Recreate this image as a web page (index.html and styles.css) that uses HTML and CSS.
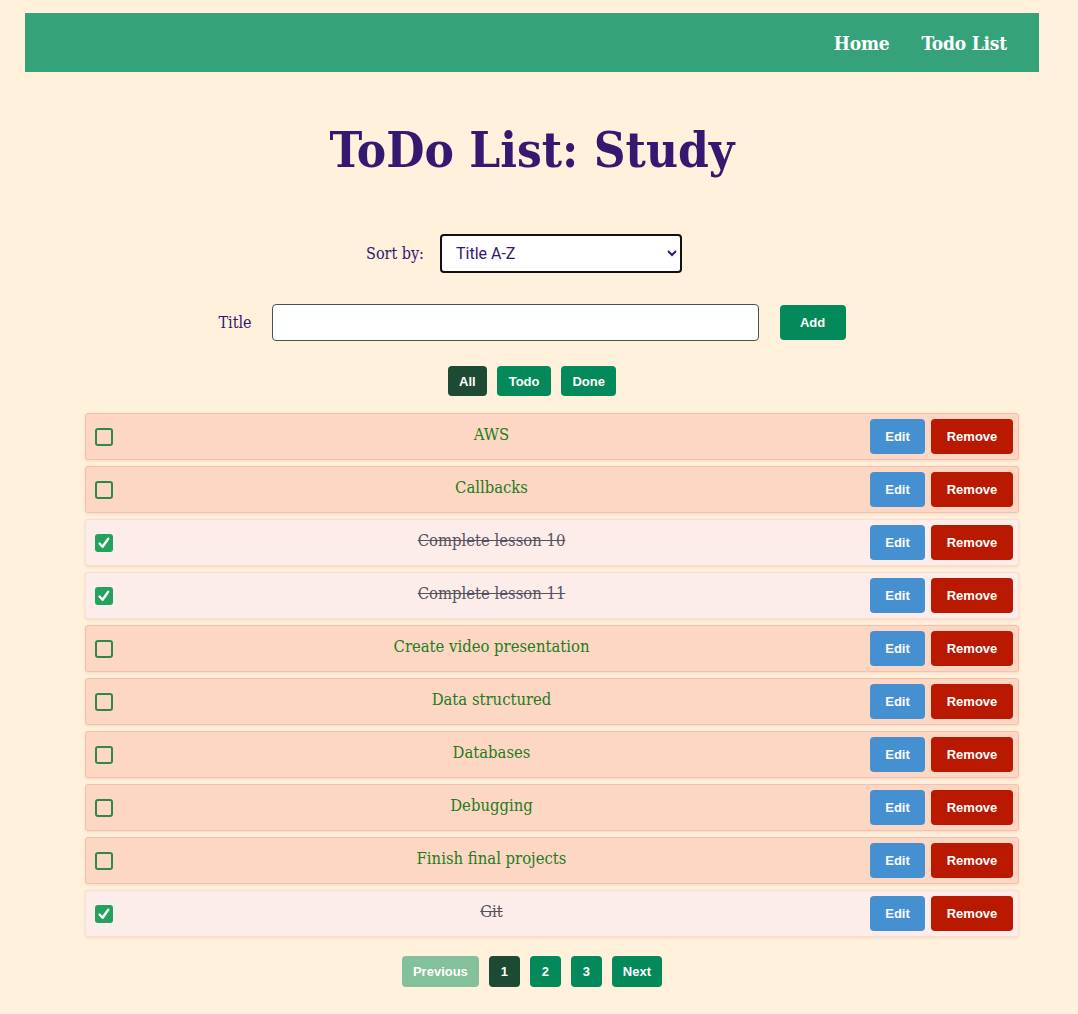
FILE: index.html
```html
<!DOCTYPE html>
<html lang="en">
<head>
<meta charset="utf-8">
<title>ToDo List: Study</title>
<link rel="stylesheet" href="styles.css">
</head>
<body>
<div class="page">
  <nav class="navbar">
    <a class="nav-link" href="#">Home</a>
    <a class="nav-link" href="#">Todo List</a>
  </nav>

  <h1 class="heading">ToDo List: Study</h1>

  <div class="sort-row">
    <label class="sort-label" for="sort">Sort by:</label>
    <select class="sort-select" id="sort">
      <option>Title A-Z</option>
      <option>Title Z-A</option>
    </select>
  </div>

  <form class="add-row" onsubmit="return false">
    <label class="add-label" for="title">Title</label>
    <input class="add-input" id="title" type="text">
    <button class="btn btn-green btn-add" type="submit">Add</button>
  </form>

  <div class="filters">
    <button class="btn btn-dark btn-filter">All</button>
    <button class="btn btn-green btn-filter">Todo</button>
    <button class="btn btn-green btn-filter">Done</button>
  </div>

  <ul class="todo-list">
    <li class="todo-item">
      <span class="check"></span>
      <span class="todo-title">AWS</span>
      <button class="btn btn-blue btn-row">Edit</button>
      <button class="btn btn-red btn-row btn-remove">Remove</button>
    </li>
    <li class="todo-item">
      <span class="check"></span>
      <span class="todo-title">Callbacks</span>
      <button class="btn btn-blue btn-row">Edit</button>
      <button class="btn btn-red btn-row btn-remove">Remove</button>
    </li>
    <li class="todo-item done">
      <span class="check checked"><svg viewBox="0 0 18 18" width="18" height="18"><path d="M4.6 9.6 L7.6 12.8 L13.2 4.8" fill="none" stroke="#fff" stroke-width="2.4" stroke-linecap="round" stroke-linejoin="round"/></svg></span>
      <span class="todo-title">Complete lesson 10</span>
      <button class="btn btn-blue btn-row">Edit</button>
      <button class="btn btn-red btn-row btn-remove">Remove</button>
    </li>
    <li class="todo-item done">
      <span class="check checked"><svg viewBox="0 0 18 18" width="18" height="18"><path d="M4.6 9.6 L7.6 12.8 L13.2 4.8" fill="none" stroke="#fff" stroke-width="2.4" stroke-linecap="round" stroke-linejoin="round"/></svg></span>
      <span class="todo-title">Complete lesson 11</span>
      <button class="btn btn-blue btn-row">Edit</button>
      <button class="btn btn-red btn-row btn-remove">Remove</button>
    </li>
    <li class="todo-item">
      <span class="check"></span>
      <span class="todo-title">Create video presentation</span>
      <button class="btn btn-blue btn-row">Edit</button>
      <button class="btn btn-red btn-row btn-remove">Remove</button>
    </li>
    <li class="todo-item">
      <span class="check"></span>
      <span class="todo-title">Data structured</span>
      <button class="btn btn-blue btn-row">Edit</button>
      <button class="btn btn-red btn-row btn-remove">Remove</button>
    </li>
    <li class="todo-item">
      <span class="check"></span>
      <span class="todo-title">Databases</span>
      <button class="btn btn-blue btn-row">Edit</button>
      <button class="btn btn-red btn-row btn-remove">Remove</button>
    </li>
    <li class="todo-item">
      <span class="check"></span>
      <span class="todo-title">Debugging</span>
      <button class="btn btn-blue btn-row">Edit</button>
      <button class="btn btn-red btn-row btn-remove">Remove</button>
    </li>
    <li class="todo-item">
      <span class="check"></span>
      <span class="todo-title">Finish final projects</span>
      <button class="btn btn-blue btn-row">Edit</button>
      <button class="btn btn-red btn-row btn-remove">Remove</button>
    </li>
    <li class="todo-item done">
      <span class="check checked"><svg viewBox="0 0 18 18" width="18" height="18"><path d="M4.6 9.6 L7.6 12.8 L13.2 4.8" fill="none" stroke="#fff" stroke-width="2.4" stroke-linecap="round" stroke-linejoin="round"/></svg></span>
      <span class="todo-title">Git</span>
      <button class="btn btn-blue btn-row">Edit</button>
      <button class="btn btn-red btn-row btn-remove">Remove</button>
    </li>
  </ul>

  <div class="pagination">
    <button class="btn btn-light btn-page">Previous</button>
    <button class="btn btn-dark btn-page btn-num">1</button>
    <button class="btn btn-green btn-page btn-num">2</button>
    <button class="btn btn-green btn-page btn-num">3</button>
    <button class="btn btn-green btn-page">Next</button>
  </div>
</div>
</body>
</html>
```

FILE: styles.css
```css
* { box-sizing: border-box; }

html, body {
  margin: 0;
  padding: 0;
  background: #fff1dc;
}

body {
  font-family: "DejaVu Serif", "Liberation Serif", serif;
  color: #33186e;
}

.page {
  margin: 13px 39px 0 25px;
}

.navbar {
  height: 59px;
  background: #36a27a;
  display: flex;
  justify-content: flex-end;
  align-items: center;
  padding: 0 32px 0 0;
  gap: 32px;
}

.nav-link {
  color: #ffffff;
  text-decoration: none;
  font-weight: bold;
  font-size: 19px;
  font-stretch: condensed;
  letter-spacing: -0.2px;
}

.heading {
  margin: 48px 0 0;
  text-align: center;
  font-size: 49px;
  line-height: 60px;
  font-weight: bold;
  font-stretch: condensed;
  color: #35186f;
}

.sort-row {
  margin-top: 54px;
  display: flex;
  justify-content: center;
  align-items: center;
}

.sort-label {
  font-size: 16px;
  font-stretch: condensed;
  margin-right: 16px;
}

.sort-select {
  width: 242px;
  height: 39px;
  margin-right: 16px;
  border: 2px solid #111;
  border-radius: 4px;
  background: #fff;
  font-family: Roboto, "Liberation Sans", sans-serif;
  font-size: 16px;
  color: #33186e;
  padding: 0 10px;
}

.add-row {
  margin-top: 31px;
  display: flex;
  justify-content: center;
  align-items: center;
}

.add-label {
  font-size: 16px;
  font-stretch: condensed;
  margin-right: 20px;
}

.add-input {
  width: 487px;
  height: 37px;
  border: 1px solid #3e5b4a;
  border-radius: 4px;
  background: #fff;
  margin-right: 21px;
}

.btn {
  border: none;
  border-radius: 4px;
  color: #fff;
  font-family: "Liberation Sans", Arial, sans-serif;
  font-weight: bold;
  font-size: 13px;
  cursor: pointer;
  padding: 0;
}

.btn-green { background: #04895a; }
.btn-dark { background: #1d4a32; }
.btn-light { background: #84c09c; }
.btn-blue { background: #4590d1; }
.btn-red { background: #b91900; }

.btn-add {
  width: 66px;
  height: 35px;
}

.filters {
  margin-top: 25px;
  display: flex;
  justify-content: center;
  gap: 10px;
}

.btn-filter {
  height: 30px;
  padding: 0 11.5px;
}

.todo-list {
  list-style: none;
  margin: 17px 20px 0 60px;
  padding: 0;
  display: flex;
  flex-direction: column;
  gap: 6px;
}

.todo-item {
  height: 47px;
  display: flex;
  align-items: center;
  padding: 0 5px 0 9px;
  background: #fed7c4;
  border: 1px solid #f5c0ad;
  border-radius: 3px;
  box-shadow: 0 1px 3px rgba(200, 140, 110, 0.25);
}

.todo-item.done {
  background: #fcecea;
  border-color: #fadcd2;
}

.check {
  width: 18px;
  height: 18px;
  border: 2px solid #2c8a48;
  border-radius: 3px;
  flex: none;
  display: block;
}

.check.checked {
  border: none;
  background: #22a25a;
}

.check svg { display: block; }

.todo-title {
  flex: 1;
  text-align: center;
  font-size: 16.5px;
  font-stretch: condensed;
  color: #237b1d;
  margin-top: -4px;
}

.done .todo-title {
  color: #555260;
  text-decoration: line-through;
}

.btn-row {
  height: 35px;
  width: 55px;
}

.btn-remove {
  width: 82px;
  margin-left: 6px;
}

.pagination {
  margin-top: 19px;
  display: flex;
  justify-content: center;
  gap: 10px;
}

.btn-page {
  height: 31px;
  padding: 0 11px;
}

.btn-num {
  width: 31px;
  padding: 0;
}
```
